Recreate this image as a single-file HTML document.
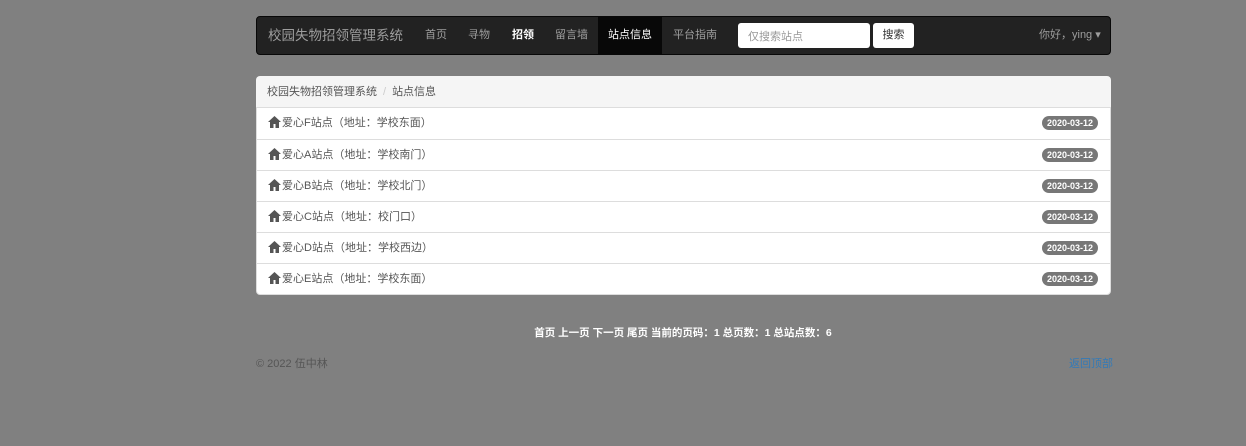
<!DOCTYPE html>
<html><head><meta charset="utf-8"><style>
*{box-sizing:border-box;margin:0;padding:0}
body{width:1246px;height:446px;background:#808080;font-family:"Liberation Sans","Noto Sans CJK SC",sans-serif;font-size:11px;color:#333;position:relative;overflow:hidden}
.nav{position:absolute;left:256px;top:16px;width:855px;height:39px;background:#222;border:1px solid #080808;border-radius:4px}
.nav .brand{position:absolute;left:11px;top:7px;font-size:13.5px;color:#9d9d9d}
.nav a{position:absolute;top:0;height:37px;line-height:36px;color:#9d9d9d;font-size:11px}
.nav .act{background:#080808;color:#fff;padding:0 10px}
.inp{position:absolute;left:481px;top:6px;width:132px;height:25px;background:#fff;border-radius:3px;color:#999;padding:5px 10px;font-size:11px}
.btn{position:absolute;left:616px;top:6px;width:41px;height:25px;background:#fff;border-radius:3px;color:#333;text-align:center;line-height:25px}
.bc{position:absolute;left:256px;top:76px;width:855px;height:31px;background:#f5f5f5;border-radius:4px 4px 0 0;padding:7px 11px;color:#555;font-size:11px}
.bc span{color:#ccc;padding:0 6px}
.list{position:absolute;left:256px;top:107px;width:855px;background:#fff;border:1px solid #ddd;border-radius:0 0 4px 4px}
.it{height:31px;border-top:1px solid #ddd;padding:0 12px 0 11px;line-height:31px;color:#555;position:relative;font-size:11px}
.it:first-child{border-top:none}
.it svg{vertical-align:-2px;margin-right:1px}
.badge{position:absolute;right:12px;top:8px;background:#777;color:#fff;font-size:9px;font-weight:bold;border-radius:8px;padding:1px 5px;line-height:12px}
.pg{position:absolute;left:0;width:1366px;top:325px;text-align:center;color:#fff;font-size:10.5px;font-weight:bold}
.ft{position:absolute;left:256px;top:355px;color:#555;font-size:11px}
.top{position:absolute;left:1069px;top:355px;color:#337ab7;font-size:11px}
</style></head><body>
<div class="nav">
<div class="brand">校园失物招领管理系统</div>
<a style="left:168px">首页</a>
<a style="left:211px">寻物</a>
<a style="left:255px;color:#fff;font-weight:bold">招领</a>
<a style="left:298px">留言墙</a>
<a class="act" style="left:341px">站点信息</a>
<a style="left:416px">平台指南</a>
<div class="inp">仅搜索站点</div>
<div class="btn">搜索</div>
<a style="left:782px">你好，ying ▾</a>
</div>
<div class="bc">校园失物招领管理系统<span>/</span>站点信息</div>
<div class="list">
<div class="it"><svg width="13" height="12" viewBox="0 0 13 12"><path d="M6.5 0L0 6h2v6h3.5V8h2v4H11V6h2z" fill="#555"/></svg>爱心F站点（地址：学校东面）<span class="badge">2020-03-12</span></div>
<div class="it"><svg width="13" height="12" viewBox="0 0 13 12"><path d="M6.5 0L0 6h2v6h3.5V8h2v4H11V6h2z" fill="#555"/></svg>爱心A站点（地址：学校南门）<span class="badge">2020-03-12</span></div>
<div class="it"><svg width="13" height="12" viewBox="0 0 13 12"><path d="M6.5 0L0 6h2v6h3.5V8h2v4H11V6h2z" fill="#555"/></svg>爱心B站点（地址：学校北门）<span class="badge">2020-03-12</span></div>
<div class="it"><svg width="13" height="12" viewBox="0 0 13 12"><path d="M6.5 0L0 6h2v6h3.5V8h2v4H11V6h2z" fill="#555"/></svg>爱心C站点（地址：校门口）<span class="badge">2020-03-12</span></div>
<div class="it"><svg width="13" height="12" viewBox="0 0 13 12"><path d="M6.5 0L0 6h2v6h3.5V8h2v4H11V6h2z" fill="#555"/></svg>爱心D站点（地址：学校西边）<span class="badge">2020-03-12</span></div>
<div class="it"><svg width="13" height="12" viewBox="0 0 13 12"><path d="M6.5 0L0 6h2v6h3.5V8h2v4H11V6h2z" fill="#555"/></svg>爱心E站点（地址：学校东面）<span class="badge">2020-03-12</span></div>
</div>
<div class="pg">首页 上一页 下一页 尾页 当前的页码：1 总页数：1 总站点数：6</div>
<div class="ft">© 2022 伍中林</div>
<div class="top">返回顶部</div>
</body></html>
